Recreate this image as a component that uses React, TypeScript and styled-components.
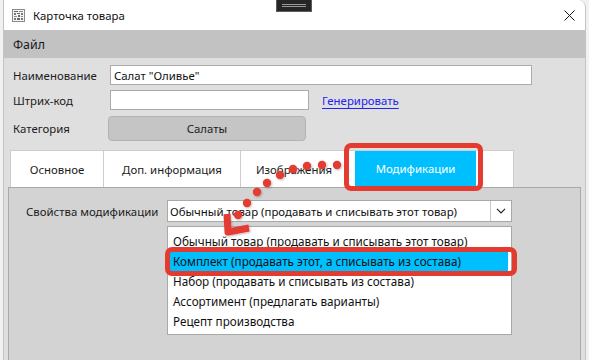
import React from "react";
import styled, { createGlobalStyle } from "styled-components";

const GlobalStyle = createGlobalStyle`
  html, body { margin: 0; padding: 0; background: #f1f1f1; }
  body { font-family: "Noto Sans", "Segoe UI", sans-serif; color: #1b1b1b; }
  * { box-sizing: border-box; }
`;

const FS = "11.4px";

const Page = styled.div`
  position: relative;
  width: 589px;
  height: 360px;
  overflow: hidden;
  background: #f1f1f1;
  padding-left: 3px;
`;

const Window = styled.div`
  width: 583px;
  height: 360px;
  display: flex;
  flex-direction: column;
  border-left: 1px solid #c4c4c4;
  border-right: 1px solid #c4c4c4;
  border-top-right-radius: 8px;
  overflow: hidden;
  background: #dfdfdf;
`;

const TitleBar = styled.div`
  height: 30px;
  flex: none;
  background: #ffffff;
  display: flex;
  align-items: center;
  padding: 0 10px 0 8px;
  gap: 8px;
  font-size: ${FS};
  color: #111;
`;

const TitleText = styled.span`
  flex: 1;
`;

const MenuBar = styled.div`
  height: 28px;
  flex: none;
  background: #c2c2c2;
  display: flex;
  align-items: center;
  padding-left: 9px;
  font-size: 12.4px;
  color: #1a1a1a;
`;

const Body = styled.div`
  flex: 1;
  display: flex;
  flex-direction: column;
  padding-top: 7px;
  min-height: 0;
`;

const FormRow = styled.div<{ $mt?: number }>`
  display: flex;
  align-items: center;
  padding-left: 9px;
  margin-top: ${(p) => p.$mt ?? 0}px;
  font-size: ${FS};
`;

const Label = styled.div<{ $w: number }>`
  width: ${(p) => p.$w}px;
  flex: none;
  color: #1c1c1c;
`;

const TextInput = styled.div<{ $w: number }>`
  width: ${(p) => p.$w}px;
  height: 20px;
  background: #fff;
  border: 1px solid #ababab;
  padding-left: 3px;
  display: flex;
  align-items: center;
  color: #111;
`;

const Link = styled.span`
  margin-left: 13px;
  color: #2222f2;
  text-decoration: underline;
  text-underline-offset: 3px;
`;

const CategoryButton = styled.div`
  width: 198px;
  height: 25px;
  margin-left: -2px;
  background: #c5c5c5;
  border: 1px solid #b3b3b3;
  border-radius: 4px;
  display: flex;
  align-items: center;
  justify-content: center;
  color: #1c1c1c;
`;

const TabStrip = styled.div`
  display: flex;
  margin: 9px 0 0 6px;
  height: 37px;
  flex: none;
`;

const Tab = styled.div<{ $w: number }>`
  width: ${(p) => p.$w}px;
  background: #fff;
  border: 1px solid #cdcdcd;
  border-right: none;
  border-bottom: none;
  display: flex;
  align-items: center;
  justify-content: center;
  font-size: ${FS};
  color: #1c1c1c;
  &:last-child {
    border-right: 1px solid #cdcdcd;
    justify-content: flex-start;
    align-items: flex-start;
    padding-left: 7px;
  }
`;

const ActiveTab = styled.div`
  width: 121px;
  height: 35px;
  background: #00bfff;
  color: #fff;
  display: flex;
  align-items: center;
  justify-content: center;
  font-size: ${FS};
`;

const Panel = styled.div`
  flex: 1;
  margin: 0 4px 0 4px;
  border: 1px solid #a9a9a9;
  border-bottom: none;
  background: #d3d3d3;
  padding: 12px 0 0 17px;
  font-size: ${FS};
`;

const PropRow = styled.div`
  display: flex;
  align-items: center;
`;

const Combo = styled.div`
  width: 345px;
  height: 22px;
  background: #fff;
  border: 1px solid #a8a8a8;
  display: flex;
  align-items: stretch;
  color: #111;
`;

const ComboText = styled.div`
  flex: 1;
  padding-left: 2px;
  display: flex;
  align-items: center;
  white-space: nowrap;
  overflow: hidden;
`;

const ComboArrow = styled.div`
  width: 21px;
  border-left: 1px solid #c8c8c8;
  display: flex;
  align-items: center;
  justify-content: center;
`;

const DropList = styled.div`
  margin: 4px 0 0 141px;
  width: 345px;
  height: 109px;
  background: #fff;
  border: 1px solid #a8a8a8;
  padding-top: 4px;
`;

const ListItem = styled.div<{ $active?: boolean }>`
  height: 20px;
  display: flex;
  align-items: center;
  padding-left: 5px;
  margin-right: 3px;
  white-space: nowrap;
  color: #111;
  font-size: 11.7px;
  background: ${(p) => (p.$active ? "#00bfff" : "transparent")};
`;

const Overlay = styled.svg`
  position: absolute;
  left: 0;
  top: 0;
  pointer-events: none;
`;

const HighlightBox = styled.div<{ $x: number; $y: number; $w: number; $h: number }>`
  position: absolute;
  left: ${(p) => p.$x}px;
  top: ${(p) => p.$y}px;
  width: ${(p) => p.$w}px;
  height: ${(p) => p.$h}px;
  border: 5px solid #e43b30;
  border-radius: 7px;
  pointer-events: none;
`;

const CaptureWidget = styled.div`
  position: absolute;
  left: 276px;
  top: -1px;
  width: 36px;
  height: 13px;
  background: #262626;
  border: 1px solid #5c5c5c;
  display: flex;
  flex-direction: column;
  justify-content: center;
  gap: 1px;
  padding: 0 5px;
`;

const CaptureLine = styled.div`
  height: 1px;
  background: #9a9a9a;
`;

const dots: [number, number][] = [
  [337, 165],
  [322, 165],
  [307, 166],
  [293, 169],
  [280, 175],
  [267, 183],
  [257, 192],
  [247, 203],
  [238, 215],
];

const AppIcon = () => (
  <svg width="13" height="13" viewBox="0 0 13 13">
    <rect x="0.5" y="0.5" width="12" height="12" fill="#f4f4f4" stroke="#8a8a8a" />
    <rect x="2" y="2" width="4" height="1" fill="#666" />
    <rect x="7" y="2" width="4" height="1" fill="#888" />
    <rect x="2" y="4" width="2" height="2" fill="#777" />
    <rect x="5" y="4" width="3" height="1" fill="#666" />
    <rect x="9" y="4" width="2" height="2" fill="#777" />
    <rect x="2" y="7" width="3" height="1" fill="#888" />
    <rect x="6" y="6" width="2" height="2" fill="#666" />
    <rect x="9" y="7" width="2" height="1" fill="#888" />
    <rect x="2" y="9" width="2" height="2" fill="#777" />
    <rect x="5" y="9" width="3" height="2" fill="#666" />
    <rect x="9" y="9" width="2" height="2" fill="#777" />
  </svg>
);

const CloseIcon = () => (
  <svg width="11" height="11" viewBox="0 0 11 11">
    <path d="M0.5 0.5 L10.5 10.5 M10.5 0.5 L0.5 10.5" stroke="#111" strokeWidth="1" fill="none" />
  </svg>
);

const Chevron = () => (
  <svg width="10" height="6" viewBox="0 0 10 6">
    <path d="M1 0.8 L5 4.8 L9 0.8" stroke="#222" strokeWidth="1.2" fill="none" />
  </svg>
);

const items = [
  "Обычный товар (продавать и списывать этот товар)",
  "Комплект (продавать этот, а списывать из состава)",
  "Набор (продавать и списывать из состава)",
  "Ассортимент (предлагать варианты)",
  "Рецепт производства",
];

export default function App() {
  return (
    <Page>
      <GlobalStyle />
      <Window>
        <TitleBar>
          <AppIcon />
          <TitleText>Карточка товара</TitleText>
          <CloseIcon />
        </TitleBar>
        <MenuBar>Файл</MenuBar>
        <Body>
          <FormRow>
            <Label $w={97}>Наименование</Label>
            <TextInput $w={422}>Салат "Оливье"</TextInput>
          </FormRow>
          <FormRow $mt={5}>
            <Label $w={97}>Штрих-код</Label>
            <TextInput $w={199} />
            <Link>Генерировать</Link>
          </FormRow>
          <FormRow $mt={6}>
            <Label $w={97}>Категория</Label>
            <CategoryButton>Салаты</CategoryButton>
          </FormRow>
          <TabStrip>
            <Tab $w={93}>Основное</Tab>
            <Tab $w={137}>Доп. информация</Tab>
            <Tab $w={107}>Изображения</Tab>
            <Tab $w={167}>
              <ActiveTab>Модификации</ActiveTab>
            </Tab>
          </TabStrip>
          <Panel>
            <PropRow>
              <Label $w={141}>Свойства модификации</Label>
              <Combo>
                <ComboText>Обычный товар (продавать и списывать этот товар)</ComboText>
                <ComboArrow>
                  <Chevron />
                </ComboArrow>
              </Combo>
            </PropRow>
            <DropList>
              {items.map((t, i) => (
                <ListItem key={t} $active={i === 1}>
                  {t}
                </ListItem>
              ))}
            </DropList>
          </Panel>
        </Body>
      </Window>
      <CaptureWidget>
        <CaptureLine />
        <CaptureLine />
      </CaptureWidget>
      <HighlightBox $x={344} $y={143} $w={139} $h={48} />
      <HighlightBox $x={165} $y={247} $w={352} $h={29} />
      <Overlay width="589" height="360" viewBox="0 0 589 360">
        <defs>
          <filter id="sh" x="-50%" y="-50%" width="200%" height="200%">
            <feDropShadow dx="1" dy="1" stdDeviation="1" floodColor="#000" floodOpacity="0.25" />
          </filter>
        </defs>
        <g filter="url(#sh)">
          {dots.map(([x, y], i) => (
            <circle key={i} cx={x} cy={y} r={4.2} fill="#e43b30" />
          ))}
          <path
            d="M227 214 L228 232 L249 228"
            stroke="#e43b30"
            strokeWidth="7"
            fill="none"
            strokeLinejoin="round"
          />
        </g>
      </Overlay>
    </Page>
  );
}
